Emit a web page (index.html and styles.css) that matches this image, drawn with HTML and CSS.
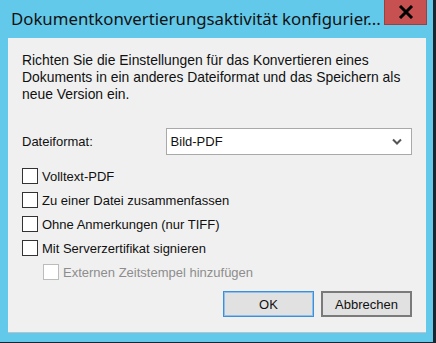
FILE: index.html
```html
<!DOCTYPE html>
<html>
<head>
<meta charset="utf-8">
<link rel="stylesheet" href="styles.css">
</head>
<body>
<div class="screen">
  <div class="window">
    <div class="titlebar">
      <div class="title">Dokumentkonvertierungsaktivität konfigurier...</div>
      <div class="close">
        <svg width="16" height="14" viewBox="0 0 16 14"><path d="M2 1 L14 13 M14 1 L2 13" stroke="#000" stroke-width="3"/></svg>
      </div>
    </div>
    <div class="panel">
      <p class="intro">Richten Sie die Einstellungen für das Konvertieren eines Dokuments in ein anderes Dateiformat und das Speichern als neue Version ein.</p>
      <div class="format-row">
        <span class="label">Dateiformat:</span>
        <div class="select">
          <span>Bild-PDF</span>
          <svg width="10" height="7" viewBox="0 0 10 7"><path d="M1 1.5 L5 5.5 L9 1.5" fill="none" stroke="#555" stroke-width="2"/></svg>
        </div>
      </div>
      <div class="checks">
        <label class="check"><span class="box"></span>Volltext-PDF</label>
        <label class="check"><span class="box"></span>Zu einer Datei zusammenfassen</label>
        <label class="check"><span class="box"></span>Ohne Anmerkungen (nur TIFF)</label>
        <label class="check"><span class="box"></span>Mit Serverzertifikat signieren</label>
        <label class="check sub disabled"><span class="box"></span>Externen Zeitstempel hinzufügen</label>
      </div>
      <div class="buttons">
        <button class="btn default">OK</button>
        <button class="btn">Abbrechen</button>
      </div>
    </div>
  </div>
</div>
</body>
</html>
```

FILE: styles.css
```css
html, body {
  margin: 0;
  padding: 0;
  background: #1c2430;
}
.screen {
  width: 436px;
  height: 343px;
  overflow: hidden;
}
.window {
  width: 433px;
  height: 342px;
  background: #63c9eb;
  display: flex;
  flex-direction: column;
  box-sizing: border-box;
}
.titlebar {
  height: 38px;
  display: flex;
  align-items: flex-start;
  justify-content: space-between;
  padding-left: 11px;
  padding-right: 6px;
  flex-shrink: 0;
}
.title {
  font-family: "Noto Sans", sans-serif;
  font-size: 16.8px;
  color: #111;
  margin-top: 7px;
  white-space: nowrap;
}
.close {
  width: 41px;
  height: 24px;
  background: #c75050;
  border: 1px solid #9c3f3f;
  border-top: none;
  display: flex;
  align-items: center;
  justify-content: center;
}
.panel {
  margin: 0 7px 9px 8px;
  flex: 1;
  background: #f0f0f0;
  border-bottom: 1px solid #b7c4cc;
  padding: 14px 14px 0 14px;
  font-family: "Liberation Sans", Arial, sans-serif;
  font-size: 13px;
  color: #111;
  display: flex;
  flex-direction: column;
}
.intro {
  margin: 0;
  font-size: 13.9px;
  line-height: 17px;
  width: 380px;
}
.format-row {
  margin-top: 25px;
  display: flex;
  align-items: center;
}
.label {
  width: 144px;
}
.select {
  width: 247px;
  height: 27px;
  box-sizing: border-box;
  border: 1px solid #a9a9a9;
  background: #fff;
  display: flex;
  align-items: center;
  justify-content: space-between;
  padding: 0 9px 0 4px;
}
.checks {
  margin-top: 13px;
  display: flex;
  flex-direction: column;
  gap: 8px;
}
.check {
  display: flex;
  align-items: center;
  gap: 4px;
  height: 16px;
}
.box {
  width: 16px;
  height: 16px;
  box-sizing: border-box;
  border: 1px solid #333;
  background: #fff;
}
.check.sub {
  padding-left: 21px;
}
.check.disabled {
  color: #8d8d8d;
}
.check.disabled .box {
  border-color: #bcbcbc;
}
.buttons {
  margin-top: 11px;
  display: flex;
  justify-content: flex-end;
  gap: 7px;
}
.btn {
  width: 91px;
  height: 26px;
  background: #e1e1e1;
  border: 1px solid #adadad;
  font-family: "Liberation Sans", Arial, sans-serif;
  font-size: 13px;
  color: #111;
  padding: 0;
}
.btn.default {
  border: 1px solid #3c8fd8;
  box-shadow: inset 0 0 0 1px #8ec0ec;
}
.btn:not(.default) {
  border: 2px solid #7a7a7a;
}
```
